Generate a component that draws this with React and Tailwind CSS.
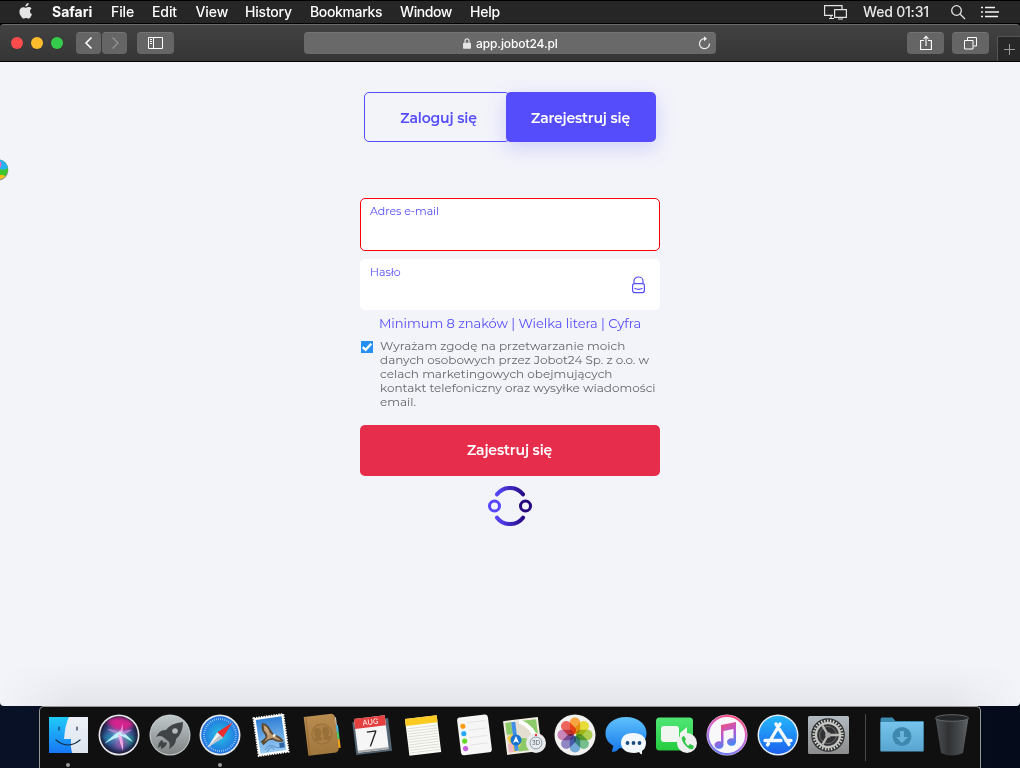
import React from "react";

const MENUS = [
  ["File", "w-[41px] tracking-[-0.1px]"],
  ["Edit", "w-[43.5px] tracking-[-0.1px]"],
  ["View", "w-[49.5px] tracking-[-0.1px]"],
  ["History", "w-[65px] tracking-[-0.2px]"],
  ["Bookmarks", "w-[90px] tracking-[-0.35px]"],
  ["Window", "w-[70px] tracking-[-0.4px]"],
  ["Help", "w-[50px] tracking-[-0.2px]"],
];

function MenuBar() {
  return (
    <header className="flex h-6 shrink-0 items-center border-y border-black bg-[#262626] text-[14px] leading-[22px] text-white">
      <svg className="-mt-0.5 ml-[18px] mr-[18px] h-4 w-4 shrink-0" viewBox="0 0 16 16" fill="#e4e4e4">
        <path d="M10.600 0c.1 1-.3 1.900-.9 2.500-.6.700-1.400 1.100-2.200 1-.1-.9.300-1.800.9-2.400C9 .5 9.900.1 10.600 0zM13.600 5.600c-1 .6-1.600 1.500-1.600 2.700 0 1.400.8 2.500 2 3-.3.900-.8 1.800-1.400 2.600-.6.900-1.200 1.700-2.200 1.700-.9 0-1.200-.5-2.300-.5-1.100 0-1.500.5-2.400.5-1 0-1.700-.9-2.300-1.800C1.800 12.100 1.200 9.600 1.500 7.800c.3-2.200 1.900-3.600 3.700-3.600 1.100 0 1.900.6 2.800.6.900 0 1.600-.7 2.900-.7 1 0 2 .5 2.700 1.500z" />
      </svg>
      <span className="w-[59px] font-bold">Safari</span>
      {MENUS.map(([label, style]) => (
        <span key={label} className={`${style} whitespace-nowrap font-medium`}>{label}</span>
      ))}
      <svg className="ml-auto mr-[14px] h-[16px] w-[26px] shrink-0" viewBox="0 0 26 16" fill="none" stroke="#e4e4e4" strokeWidth="1.2">
        <path d="M10 11.400H1.600V1.600H19V5M6 14.500h5M8 12v2" />
        <path d="M11.600 5.600h11.800v7.800H11.600zM15 15h5" />
      </svg>
      <span className="w-[87px] whitespace-nowrap font-medium tracking-[-0.2px] text-[#e8e8e8]">Wed 01:31</span>
      <svg className="h-4 w-4 shrink-0" viewBox="0 0 16 16" fill="none" stroke="#e4e4e4" strokeWidth="1.300">
        <circle cx="6.500" cy="6.500" r="4.800" />
        <path d="M10 10l5 5" />
      </svg>
      <svg className="ml-[14px] mr-[21px] h-3 w-[19px] shrink-0" viewBox="0 0 19 12" stroke="#f2f2f2" strokeWidth="1.500">
        <path d="M1 1.500h2M5 1.500h10M1 6h2M5 6h14M1 10.500h2M5 10.500h13" />
      </svg>
    </header>
  );
}

function ToolButton({ className, children }) {
  return (
    <button className={`flex h-[22px] shrink-0 items-center justify-center rounded-[4px] border-t border-[#747474] bg-[#656565] ${className}`}>
      {children}
    </button>
  );
}

function Toolbar() {
  return (
    <div className="flex h-[38px] shrink-0 items-center rounded-t-[4px] border-b border-b-black border-t border-t-[#6b6b6b] bg-linear-to-b from-[#424242] to-[#353535]">
      <div className="ml-[11px] flex gap-2">
        <i className="h-3 w-3 rounded-full bg-[#ff4b4b]" />
        <i className="h-3 w-3 rounded-full bg-[#ffbd2e]" />
        <i className="h-3 w-3 rounded-full bg-[#35cc4b]" />
      </div>
      <ToolButton className="ml-[13px] w-[25px]">
        <svg className="-mt-0.5" width="10" height="14" viewBox="0 0 10 14" fill="none" stroke="#fff" strokeWidth="1.600"><path d="M7.500 1.500L2 7l5.500 5.500" /></svg>
      </ToolButton>
      <ToolButton className="ml-px w-[25px]">
        <svg className="-mt-0.5" width="10" height="14" viewBox="0 0 10 14" fill="none" stroke="#929292" strokeWidth="1.400"><path d="M2.500 1.500L8 7l-5.500 5.500" /></svg>
      </ToolButton>
      <ToolButton className="ml-[10px] w-[37px]">
        <svg className="-mt-px" width="15" height="12" viewBox="0 0 15 12" fill="none" stroke="#fff"><path d="M.5.5h14v11H.5zM5.500.5v11M2 2.500h2M2 4.500h2M2 6.500h2" /></svg>
      </ToolButton>
      <div className="ml-[130px] flex h-[22px] w-[412px] shrink-0 items-center rounded-[4px] border-t border-[#747474] bg-[#696969]">
        <svg className="-mt-px ml-[159px] shrink-0" width="8" height="11" viewBox="0 0 8 11" fill="none" stroke="#e4e4e4" strokeWidth="1.200">
          <path d="M2 5V2.900a2 2 0 0 1 4 0V5" /><rect y="4.700" width="8" height="6" rx=".7" fill="#e4e4e4" stroke="none" />
        </svg>
        <span className="ml-[5px] whitespace-nowrap text-[12px] font-medium leading-5 tracking-[-0.1px] text-white">app.jobot24.pl</span>
        <svg className="-mt-0.5 ml-auto mr-[5px] shrink-0" width="13" height="14" viewBox="0 0 13 14" fill="none" stroke="#eee" strokeWidth="1.200">
          <path d="M11.500 7.500A5 5 0 1 1 6.500 2.700H8" /><path d="M6 .2L9 2.700 6 5.200z" fill="#eee" stroke="none" />
        </svg>
      </div>
      <ToolButton className="ml-auto w-[37px]">
        <svg className="-mt-0.5" width="12" height="16" viewBox="0 0 12 16" fill="none" stroke="#fff" strokeWidth="1.100"><path d="M4 5.500H.6v9h10.800v-9H8M6 11V1.500M3.500 4L6 1.300 8.500 4" /></svg>
      </ToolButton>
      <ToolButton className="ml-2 w-[37px]">
        <svg width="13" height="13" viewBox="0 0 13 13" fill="none" stroke="#fff"><path d="M.5 3.500h8.500v8.500H.5zM3.500 3V.5h9V9H9.500" /></svg>
      </ToolButton>
      <div className="ml-2 flex h-[25px] w-[23px] shrink-0 items-center justify-center self-end border-l border-t border-[#555] bg-[#272727]">
        <svg width="11" height="11" viewBox="0 0 11 11" stroke="#9b9b9b"><path d="M0 5.500h11M5.500 0v11" /></svg>
      </div>
    </div>
  );
}

const CONSENT = [
  "Wyrażam zgodę na przetwarzanie moich",
  "danych osobowych przez Jobot24 Sp. z o.o. w",
  "celach marketingowych obejmujących",
  "kontakt telefoniczny oraz wysyłke wiadomości",
  "email.",
];

function RegisterPage() {
  return (
    <main className="relative flex h-[644px] shrink-0 flex-col items-center overflow-hidden rounded-b-[4px] bg-[#f3f4fa] font-[Montserrat,Inter,sans-serif]">
      <svg className="absolute left-0 top-[96px]" width="9" height="23" viewBox="0 0 9 23">
        <defs><clipPath id="edgeBall"><circle cx="-2" cy="11.500" r="10" /></clipPath></defs>
        <circle cx="-2.500" cy="12" r="10.800" fill="#999" />
        <g clipPath="url(#edgeBall)">
          <path d="M0 0h9v23H0z" fill="#3dc62b" />
          <path d="M0 0h9v9Q5 13 0 11z" fill="#25b2f5" />
          <path d="M0 3q3 3 0 7z" fill="#f565ce" />
          <path d="M0 17q3-1 6 2l-2 4H0z" fill="#f6bd16" />
        </g>
      </svg>
      <div className="mt-[30px] flex h-[50px] w-[292px] shrink-0 text-[14px] leading-[50px]">
        <button className="-mr-1 h-[50px] w-[146px] shrink-0 whitespace-nowrap rounded-[5px] border border-[#554dfb] pl-[3px] pt-px font-semibold leading-[48px] tracking-[-0.15px] text-[#554dfb]">Zaloguj się</button>
        <button className="relative h-[50px] w-[150px] shrink-0 whitespace-nowrap rounded-[5px] bg-[#554dfb] pr-px pt-px font-semibold tracking-[-0.17px] text-white shadow-[0_6px_20px_rgba(85,77,251,0.22)]">Zarejestruj się</button>
      </div>
      <label className="mt-[56px] block h-[53px] w-[300px] shrink-0 rounded-[5px] border border-[#fb0007] bg-white pl-[9px] pt-[4px] text-[11px] leading-4 tracking-[-0.05px] text-[#554dfb]">Adres e-mail</label>
      <label className="mt-2 flex h-[51px] w-[300px] shrink-0 justify-between rounded-[5px] bg-white pl-[10px] pr-[15px] pt-[5px] text-[11px] leading-4 text-[#554dfb]">
        <span>Hasło</span>
        <svg className="mt-[12px]" width="13" height="18" viewBox="0 0 13 18" fill="none" stroke="#554dfb" strokeWidth="1.200">
          <path d="M2 7.500V5a4.500 4 0 0 1 9 0v2.500" />
          <rect x=".6" y="7.600" width="11.800" height="9" rx="2" />
          <path d="M2.500 12.300q4 2 8 0" />
        </svg>
      </label>
      <p className="mt-[5px] h-4 w-[262px] shrink-0 whitespace-nowrap text-[13px] leading-4 tracking-[-0.045px] text-[#554dfb]">Minimum 8 znaków | Wielka litera | Cyfra</p>
      <div className="mt-[7px] flex w-[300px] shrink-0">
        <span className="ml-px mr-[7px] mt-[3px] flex h-3 w-3 shrink-0 items-center justify-center bg-[#258ff3]">
          <svg width="12" height="12" viewBox="0 0 12 12" fill="none" stroke="#fff" strokeWidth="2.300"><path d="M1.700 6.200l2.900 2.600L10.300 2.700" /></svg>
        </span>
        <div className="pt-px text-[12px] leading-[14px] text-[#65656a]">
          {CONSENT.map((line) => (
            <div key={line} className="whitespace-nowrap">{line}</div>
          ))}
        </div>
      </div>
      <button className="mt-[16px] h-[51px] w-[300px] shrink-0 rounded-[5px] bg-[#e62d4b] pb-px pr-px text-[14px] font-semibold leading-[50px] tracking-[-0.15px] text-white">Zajestruj się</button>
      <svg className="mt-[10px] shrink-0" width="44" height="40" viewBox="0 0 44 40" fill="none" strokeWidth="4" strokeLinecap="round">
        <defs><linearGradient id="brand" gradientUnits="userSpaceOnUse" x1="8" y1="20" x2="37" y2="20"><stop stopColor="#5647ff" /><stop offset="1" stopColor="#26077f" /></linearGradient></defs>
        <path d="M9 8.300a16.500 16.500 0 0 1 26 0M9 31.700a16.500 16.500 0 0 0 26 0" stroke="url(#brand)" />
        <circle cx="6.500" cy="20" r="5" stroke="#5647ff" strokeWidth="3" />
        <circle cx="37.500" cy="20" r="5" stroke="#26077f" strokeWidth="3" />
      </svg>
      <div className="absolute inset-x-0 bottom-0 flex h-[42px]">
        <div className="w-full bg-linear-to-b from-transparent to-[#e2e3e8]/90 [mask-image:linear-gradient(to_right,transparent,black_70px,black_950px,transparent)]" />
      </div>
    </main>
  );
}

function Grad({ id, from, to }) {
  return <linearGradient id={id} x1="0" y1="0" x2="0" y2="1"><stop stopColor={from} /><stop offset="1" stopColor={to} /></linearGradient>;
}

const range = (n) => Array.from({ length: n }, (_, i) => i);
const PETALS = ["#f99b2a", "#e5d91e", "#a4c93b", "#65b67f", "#649fd3", "#8277bd", "#c276b2", "#ed5149"];

const APPS = [
  <g key="finder">
    <defs><Grad id="finder" from="#20cbf8" to="#1777f6" /><Grad id="finderR" from="#eef2f8" to="#dde4ee" /></defs>
    <path d="M-19-18h39v36h-39z" fill="url(#finder)" />
    <path d="M1-18h19v36H4Q2 11 3 4H-4Q-3-10 1-18z" fill="url(#finderR)" />
    <path d="M-9-8v3M9-8v3M-12 5Q0 15 12 5" fill="none" stroke="#16304b" strokeWidth="1.200" strokeLinecap="round" />
  </g>,
  <g key="siri">
    <defs><radialGradient id="siri"><stop stopColor="#b5eaff" /><stop offset=".35" stopColor="#5a7cb8" /><stop offset=".75" stopColor="#30407a" /><stop offset="1" stopColor="#17182f" /></radialGradient><filter id="soft"><feGaussianBlur stdDeviation="2.200" /></filter><filter id="glow"><feGaussianBlur stdDeviation=".6" /></filter><clipPath id="siriC"><circle r="18.500" /></clipPath></defs>
    <circle r="20.500" fill="#e5e5eb" /><circle r="18.800" fill="url(#siri)" />
    <g clipPath="url(#siriC)"><g filter="url(#soft)">
      <path d="M-13-14Q0-23 16-12L8-4-4-5z" fill="#d5208c" /><path d="M-17 0L-4-1-10 10z" fill="#1690b4" opacity=".8" /><path d="M6 1l10 1-6 10z" fill="#18a293" opacity=".8" /><path d="M0 2L7 6 4 15-4 12z" fill="#b156b4" opacity=".7" />
    </g>
    <g filter="url(#glow)">
      <path d="M-15 9Q-7 1-2-2 0-4 3-4L5-2Q9 1 14 7 8 4 3 1-5 3-15 9z" fill="#c6fbff" opacity=".9" />
      <path d="M-1-1Q5 0 4 16 1 9-1-1z" fill="#ffaee9" opacity=".9" /><path d="M0-3Q3-6 3-12 5-6 3-2z" fill="#f6a7e3" opacity=".7" />
      <path d="M-12-6Q-5-6 0-2-7-2-12-6zM2-2Q8-6 13-5 8-2 4 0z" fill="#c68bdf" opacity=".7" />
    </g></g>
  </g>,
  <g key="rocket">
    <defs><Grad id="launch" from="#bfc8cb" to="#808383" /></defs>
    <circle r="20.500" fill="#c5cccd" /><circle r="19.500" fill="url(#launch)" />
    <path d="M13-13Q1-12-4-5Q-10-6-14 2Q-10 0-7 2L-2 6Q1 8-1 14Q6 10 6 4Q13-2 13-13z" fill="#404446" />
    <path d="M-8 5q-4 2-4 8 1-1 3-2v3q5-2 6-6l-2-1-1 1z" fill="#404446" /><circle cx="5" cy="-4" r="2.800" fill="#b3b8b9" />
  </g>,
  <g key="safari">
    <defs><radialGradient id="safari"><stop stopColor="#28c5e3" /><stop offset="1" stopColor="#2170df" /></radialGradient></defs>
    <circle r="20.500" fill="#e5e7e9" /><circle r="18.800" fill="url(#safari)" />
    <circle r="16" fill="none" stroke="#b8e1ff" strokeWidth="2.200" strokeDasharray=".6 1.494" />
    <path d="M12.500-12.500L2.800 2.800-2.800-2.800z" fill="#f02c2f" /><path d="M-12.500 12.500L2.800 2.800-2.800-2.800z" fill="#f0f0f0" /><path d="M-12.500 12.500L2.800 2.800 0 0z" fill="#bdc3c9" />
  </g>,
  <g key="mail" transform="rotate(-8)">
    <defs><Grad id="sky" from="#2f7fd6" to="#9dcdf2" /></defs>
    <path d="M-15-19h30v38h-30z" fill="#fff" stroke="#fff" strokeWidth="2" strokeDasharray="1.500 1" />
    <path d="M-13-17h26v34h-26z" fill="url(#sky)" />
    <path d="M-8 14q5-6 10-2t9-1M-6 16q5-7 7-1" stroke="#5693cc" fill="none" /><path d="M7 9h5v5H7z" fill="#2f64a5" />
    <path d="M-7-13Q-2-12 0-6L3 0Q9 2 12 8Q5 9 1 5L-3 5-9 9-11 5-6 2Q-5-1-8-5-9-10-7-13z" fill="#5e4932" />
    <path d="M-6-11Q-2-9-1-3L2 1Q7 3 9 7Q3 5 1 3L-4 4-8 6-4 2Q-3-3-6-6z" fill="#bd9a72" />
    <path d="M-5-9l3 5M-6-6l4 5" stroke="#e2cba9" strokeWidth=".8" /><circle cx="3" cy="1" r="1.500" fill="#f3eee2" />
  </g>,
  <g key="contacts" transform="rotate(-7)">
    <defs><Grad id="book" from="#b98c50" to="#a1773d" /></defs>
    <path d="M12-16h4v8h-4z" fill="#c9d2d1" /><path d="M12-8h5v7h-5z" fill="#4bb7e1" /><path d="M12-1h5v7h-5z" fill="#48cb66" /><path d="M12 6h5v9h-5z" fill="#f2a21d" />
    <path d="M-16-20h28q3 1 3 4v31q0 3-3 4h-28z" fill="url(#book)" /><path d="M-14-19v38" stroke="#936a34" strokeWidth=".8" />
    <circle cx="0" cy="-1" r="10" fill="#ac8046" stroke="#96703a" />
    <g fill="#987039"><ellipse cx="-4" cy="-3" rx="3.400" ry="4.500" /><ellipse cx="4" cy="-3" rx="3.400" ry="4.500" /><path d="M-8.500 4Q-7 1-5 1h2q2 0 3 3-4 3-8.500 0zM.5 4Q2 1 3 1h2q2 0 3.500 3-4 3-8 0z" /></g>
  </g>,
  <g key="calendar" transform="rotate(-7)">
    <path d="M-18-15h36v33h-36z" fill="#536573" /><path d="M-16-18h31v34h-31z" fill="#f6f6f6" /><path d="M-16-18h31v10h-31z" fill="#e4403f" />
    <path d="M-16 14h31v2h-31z" fill="#aaa" />
    <text x="0" y="-10.500" textAnchor="middle" fontSize="7.500" fill="#fff" fontFamily="Inter">AUG</text>
    <text x="0" y="11" textAnchor="middle" fontSize="21" fontWeight="300" fill="#222" fontFamily="Inter">7</text>
  </g>,
  <g key="notes" transform="rotate(-7)">
    <path d="M-16-18h32v37h-32z" fill="#fbfbf5" /><path d="M-16-18h32v7h-32z" fill="#fbcb21" />
    {range(10).map((i) => <path key={i} d={`M-15 ${-8 + i * 2.700}h30`} stroke="#d3d3ce" strokeWidth=".7" />)}
  </g>,
  <g key="reminders" transform="rotate(-7)">
    <rect x="-15" y="-19" width="31" height="38" rx="3" fill="#f6f6f6" />
    {["#ff9c13", "#26a8f5", "#63d929", "#c65ee0"].map((c, i) => <g key={c}><circle cx="-10" cy={-10 + i * 7.500} r="2.600" fill={c} /><path d={`M-5 ${-13 + i * 7.500}h18`} stroke="#ddd" strokeWidth=".7" /></g>)}
  </g>,
  <g key="maps">
    <g transform="translate(-2 1) rotate(-7)">
      <path d="M-17-17h35v34h-35z" fill="#f3eee2" /><path d="M-15-15h31v30h-31z" fill="#e4ded0" />
      <path d="M2-15h14V6Q13-6 2-15zM-15-15h6v12h-6zM-5 3q13-4 18 12H-5z" fill="#8dca69" /><path d="M-15 0l8-5L-2 8-8 15h-2z" fill="#f5cd43" /><path d="M-7-15V14" stroke="#4290e5" strokeWidth="4" /><path d="M-15 6v9h5V6z" fill="#efb7c3" />
      <path d="M-1-15Q12-8 15 8" fill="none" stroke="#fff" strokeWidth="4" />
    </g>
    <circle cx="-8" cy="5" r="5.500" fill="#1774d2" /><path d="M-8 1l3 7-3-1.500L-11 8z" fill="#fff" />
    <circle cx="12" cy="8" r="10" fill="#ebebeb" /><circle cx="12" cy="8" r="6" fill="none" stroke="#829eb0" /><text x="12" y="10.300" textAnchor="middle" fontSize="6" fontFamily="Inter" fill="#466174">3D</text><path d="M11-1h2v2h-2z" fill="#e33" />
  </g>,
  <g key="photos">
    <circle r="20.500" fill="#f1f1ef" />
    <g style={{ isolation: "isolate" }}>{PETALS.map((c, i) => <rect key={c} x="-5.200" y="-17.500" width="10.400" height="16.500" rx="5" fill={c} opacity=".88" style={{ mixBlendMode: "multiply" }} transform={`rotate(${i * 45})`} />)}</g>
  </g>,
  <g key="messages">
    <defs><Grad id="msg" from="#5fc2fc" to="#1779ed" /></defs>
    <path d="M0-18c-12 0-20.500 7-20.500 16 0 6 3 10 8 13-1 3-2 4-1 6 4 0 6-3 7-4C13 16 20.500 7 20.500-2 20.500-11 12-18 0-18z" fill="url(#msg)" />
    <path d="M7-2c-8 0-12 4-12 10S0 18 8 18q3 0 5-1 2 3 3 2l0-3q4-3 4-8C20 2 15-2 7-2z" fill="#f3f8fc" />
    <circle cx="1.500" cy="8" r="1.900" fill="#194d80" /><circle cx="7.500" cy="8" r="1.900" fill="#194d80" /><circle cx="13.500" cy="8" r="1.900" fill="#194d80" />
  </g>,
  <g key="facetime">
    <defs><Grad id="ft" from="#4fe775" to="#25cb3f" /></defs>
    <rect x="-20" y="-17.500" width="37" height="33" rx="3.500" fill="url(#ft)" /><rect x="-15" y="-9" width="18" height="16" rx="3" fill="#f1f6f1" /><path d="M4-2l7-6V7L4 3z" fill="#f1f6f1" />
    <circle cx="11" cy="8" r="10" fill="#f0f0f0" /><path d="M6 2Q5 5 9 10t8 4l1-3-4-2-2 2Q9 8 9 6l1-2-2-3z" fill="#2fc648" />
  </g>,
  <g key="itunes">
    <defs><linearGradient id="ring" x1=".7" y1="0" x2=".3" y2="1"><stop stopColor="#fb4c7c" /><stop offset=".5" stopColor="#c46be0" /><stop offset="1" stopColor="#6b7ff5" /></linearGradient><linearGradient id="note" x1=".2" y1="0" x2=".6" y2="1"><stop stopColor="#fa5261" /><stop offset=".5" stopColor="#bb56d3" /><stop offset="1" stopColor="#3a8cf5" /></linearGradient></defs>
    <circle r="20.500" fill="#f4d7e8" /><circle r="19" fill="#f8f8fb" stroke="url(#ring)" strokeWidth="2" />
    <path d="M-6-10L9-13V7a4.500 3.800 0 1 1-2.500-3.400V-6L-3.500-4V10A4.500 3.800 0 1 1-6 6.600z" fill="url(#note)" />
  </g>,
  <g key="appstore">
    <defs><Grad id="as" from="#24b7fb" to="#1c61ee" /></defs>
    <circle r="20.500" fill="#e3ebf3" /><circle r="19" fill="url(#as)" />
    <path d="M2-11L-7.500 5M-2-11L11 9.500M-13 5.500H3M8 5.500h5M-9.500 8.500l-1 1.500" stroke="#f4f9ff" strokeWidth="3.300" strokeLinecap="round" />
  </g>,
  <g key="settings">
    <defs><Grad id="pref" from="#b2bbc2" to="#8c8c8c" /></defs>
    <rect x="-20" y="-19" width="41" height="38" rx="1.500" fill="url(#pref)" />
    <circle r="16.800" fill="#303132" /><circle r="14.300" fill="none" stroke="#d0d0ce" strokeWidth="2.600" strokeDasharray="1.500 1.495" /><circle r="12" fill="none" stroke="#c4c4c1" strokeWidth="2.400" />
    <circle r="8.500" fill="none" stroke="#72736f" strokeWidth="1" /><path d="M0 0h11M0 0l-5.500-9.500M0 0l-5.500 9.500" stroke="#b9b9b6" strokeWidth="2.400" /><circle r="2.800" fill="#aaa" />
  </g>,
];

function Dock() {
  return (
    <div className="flex h-[62px] w-[942px] shrink-0 rounded-t-[5px] border border-b-0 border-[#959896] bg-[#101010] pl-[3px]">
      {APPS.map((art, i) => (
        <div key={art.key} className="flex w-[50.67px] shrink-0 flex-col items-center pt-[4px]">
          <svg className="shrink-0" width="48" height="48" viewBox="-24 -24 48 48">{art}</svg>
          {(i === 0 || i === 3) && <i className="mt-[4px] h-1 w-1 shrink-0 rounded-full bg-[#999]" />}
        </div>
      ))}
      <div className="ml-[11px] mt-[7px] h-[47px] w-px shrink-0 bg-[#484848]" />
      <svg className="ml-[11px] mt-[4px] shrink-0" width="50" height="48" viewBox="-25 -24 50 48">
        <defs><Grad id="folder" from="#76c4ec" to="#58a5cf" /></defs>
        <path d="M-21.500 15v-31l1-1.500h11l3 3.500h28v29z" fill="#3d8bb0" /><path d="M-21.500-13h43v29.500h-43z" fill="url(#folder)" />
        <circle cy="1.500" r="9.500" fill="#3e87ae" /><path d="M-2-4h4v6h4l-6 6-6-6h4z" fill="#67b3da" />
      </svg>
      <svg className="ml-[1px] mt-[4px] shrink-0" width="48" height="48" viewBox="-24 -24 48 48">
        <defs><linearGradient id="bin"><stop stopColor="#4d5053" /><stop offset=".4" stopColor="#303234" /><stop offset=".8" stopColor="#4b4e50" /><stop offset="1" stopColor="#656769" /></linearGradient></defs>
        <path d="M-16.500-17L-11 18Q0 23 11 18L16.500-17z" fill="url(#bin)" /><ellipse cy="-17" rx="16.500" ry="3.300" fill="#242729" stroke="#626668" />
      </svg>
    </div>
  );
}

export default function App() {
  return (
    <div className="flex h-[768px] w-[1020px] flex-col overflow-hidden bg-linear-to-r from-[#091126] to-[#050b1b] font-[Inter,sans-serif]">
      <div className="shrink-0 bg-black"><MenuBar /><Toolbar /></div>
      <RegisterPage />
      <div className="flex justify-center"><Dock /></div>
    </div>
  );
}
